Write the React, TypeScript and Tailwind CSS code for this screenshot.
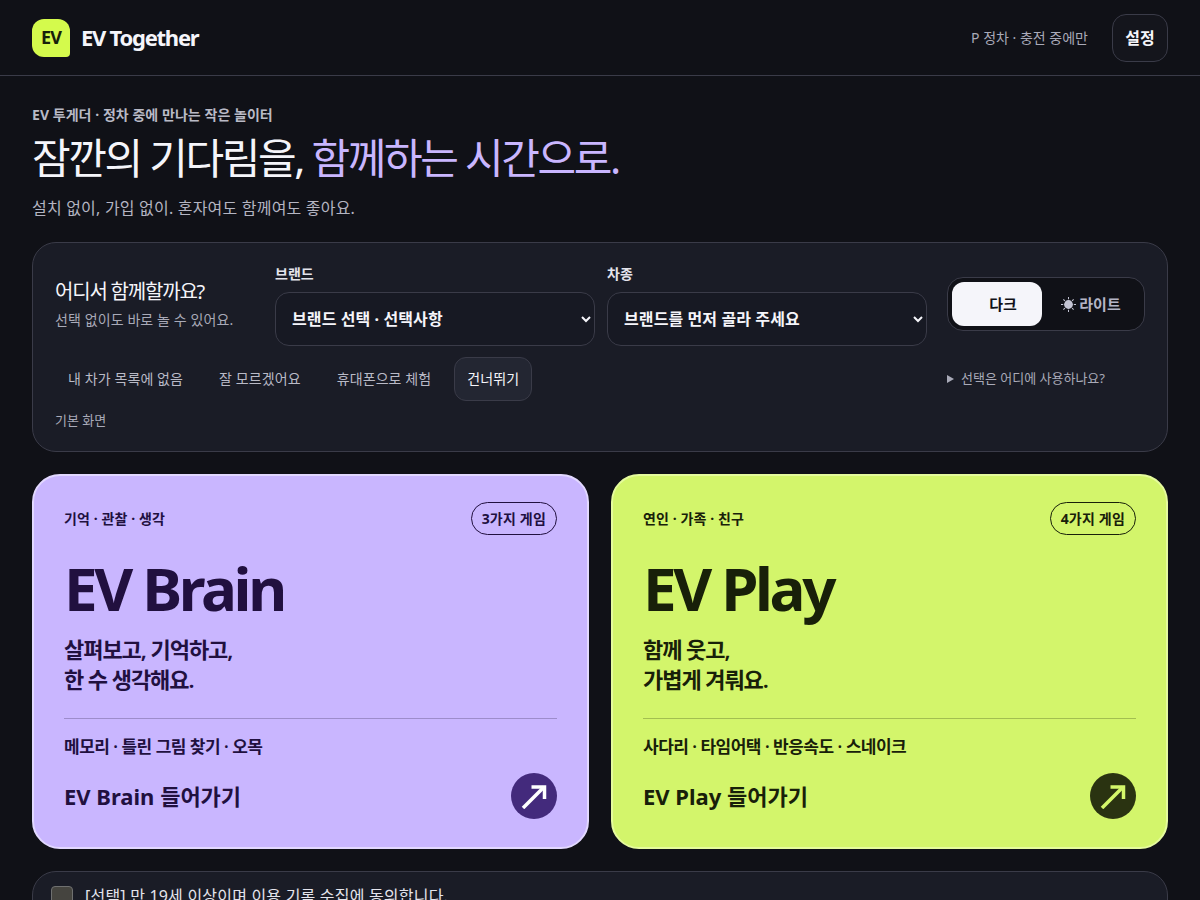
import React from "react";

const sans = "font-['Noto_Sans','Noto_Sans_CJK_KR',sans-serif]";

function Arrow({ color }: { color: string }) {
  return (
    <svg width="26" height="26" viewBox="0 0 26 26" fill="none" stroke={color} strokeWidth="3.5">
      <path d="M2 25 L23 4" />
      <path d="M10.5 4 H23.5 V16" />
    </svg>
  );
}

function Sun() {
  return (
    <svg width="15" height="15" viewBox="0 0 15 15" fill="#c4c5d4">
      <circle cx="7.5" cy="7.5" r="4.4" />
      <path d="M7 0h1v2.2H7zM7 12.8h1V15H7zM0 7h2.2v1H0zM12.8 7H15v1h-2.2zM2 2.7l.7-.7 1.6 1.6-.7.7zM10.7 11.4l.7-.7 1.6 1.6-.7.7zM2 12.3l1.6-1.6.7.7-1.6 1.6zM10.7 3.6L12.3 2l.7.7-1.6 1.6z" />
    </svg>
  );
}

function Card({
  tag, badge, title, l1, l2, games, cta, bg, border, ink, circle, arrow, rule,
}: {
  tag: string; badge: string; title: string; l1: string; l2: string; games: string; cta: string;
  bg: string; border: string; ink: string; circle: string; arrow: string; rule: string;
}) {
  return (
    <a className={`flex h-[375px] w-[557px] flex-col rounded-[28px] border-2 px-[30px] pt-[26px] ${bg} ${border} ${ink}`}>
      <div className="flex items-center justify-between">
        <span className="text-[14px] font-bold tracking-[0.1px]">{tag}</span>
        <span className="flex h-[33px] items-center rounded-full border border-current px-[10px] text-[14px] font-bold tracking-[0.2px]">{badge}</span>
      </div>
      <h2 className="mt-[15px] text-[60px] leading-[76px] font-bold tracking-[-3.35px]">{title}</h2>
      <p className="mt-[8px] text-[22px] leading-[30px] font-semibold tracking-[-1.05px]">
        {l1}
        <br />
        {l2}
      </p>
      <div className={`mt-[24px] h-px w-full ${rule}`} />
      <p className="mt-[15px] text-[17px] leading-[25px] font-semibold tracking-[-0.5px]">{games}</p>
      <div className="mt-[14px] flex items-center justify-between">
        <span className="text-[22px] font-bold">{cta}</span>
        <span className={`flex h-[46px] w-[46px] items-center justify-center rounded-full ${circle}`}>
          <Arrow color={arrow} />
        </span>
      </div>
    </a>
  );
}

export default function App() {
  return (
    <div className={`h-[900px] w-full overflow-hidden bg-[#101117] text-[#f5f5fa] ${sans}`}>
      <header className="flex h-[76px] items-center justify-between border-b border-[#3a3b48] px-8">
        <div className="flex items-center gap-[11px]">
          <span className="flex h-[38px] w-[38px] items-center justify-center rounded-[12px] rounded-br-[4px] bg-[#d4fa4c] text-[18px] font-bold tracking-[-1px] text-[#17200a]">EV</span>
          <span className="text-[22px] font-bold tracking-[-1.25px]">EV Together</span>
        </div>
        <div className="flex items-center gap-6">
          <span className="text-[14px] text-[#a9aab8]">P 정차 · 충전 중에만</span>
          <button className="h-[48px] w-[56px] rounded-[14px] border border-[#3a3b48] bg-[#14151c] text-[16px] font-bold">설정</button>
        </div>
      </header>

      <main className="px-8 pt-[28px]">
        <p className="text-[14px] leading-[22px] font-bold tracking-[0.05px] text-[#b9bac6]">EV 투게더 · 정차 중에 만나는 작은 놀이터</p>
        <h1 className="mt-[6px] text-[42px] leading-[52px] font-normal tracking-[-2.4px]">
          잠깐의 기다림을, <span className="text-[#c9b6ff]">함께하는 시간으로.</span>
        </h1>
        <p className="mt-[12px] text-[16px] leading-[24px] tracking-[0.2px] text-[#b4b5c2]">설치 없이, 가입 없이. 혼자여도 함께여도 좋아요.</p>

        <section className="mt-[22px] h-[210px] rounded-[24px] border border-[#3a3b48] bg-[#1a1c26] px-[22px] pt-[21px]">
          <div className="flex items-start">
            <div className="w-[220px] pt-[14px]">
              <p className="text-[20px] leading-[28px] tracking-[-1.2px]">어디서 함께할까요?</p>
              <p className="mt-[3px] text-[14px] leading-[22px] tracking-[0.1px] text-[#a9aab8]">선택 없이도 바로 놀 수 있어요.</p>
            </div>
            <label className="mr-3 block w-[320px]">
              <span className="block text-[14px] leading-[20px] font-bold text-[#e4e4ec]">브랜드</span>
              <select className="mt-[8px] h-[54px] w-full rounded-[14px] border border-[#3a3b48] bg-[#171923] pl-[12px] text-[16px] font-bold tracking-[0.1px] text-[#f5f5fa]">
                <option>브랜드 선택 · 선택사항</option>
              </select>
            </label>
            <label className="block w-[320px]">
              <span className="block text-[14px] leading-[20px] font-bold text-[#e4e4ec]">차종</span>
              <select className="mt-[8px] h-[54px] w-full rounded-[14px] border border-[#3a3b48] bg-[#171923] pl-[12px] text-[16px] font-bold tracking-[0.1px] text-[#f5f5fa]">
                <option>브랜드를 먼저 골라 주세요</option>
              </select>
            </label>
            <div className="mt-[13px] ml-auto flex h-[54px] w-[198px] items-center rounded-[16px] border border-[#3a3b48] bg-[#101117] p-[4px]">
              <span className="flex h-[44px] w-[90px] items-center justify-center rounded-[12px] bg-[#f5f5fa] pl-[12px] text-[15px] font-bold text-[#101117]">다크</span>
              <span className="flex h-[44px] flex-1 items-center justify-center gap-[3px] text-[15px] font-bold text-[#b4b5c6]">
                <Sun />
                라이트
              </span>
            </div>
          </div>

          <div className="mt-[11px] flex items-start justify-between">
            <div>
              <div className="flex items-center gap-[10px] text-[14px] tracking-[0.1px] text-[#b9bac6]">
                <button className="h-[44px] px-[13px] pb-[2px]">내 차가 목록에 없음</button>
                <button className="h-[44px] px-[13px] pb-[2px]">잘 모르겠어요</button>
                <button className="h-[44px] px-[13px] pb-[2px]">휴대폰으로 체험</button>
                <button className="h-[44px] rounded-[12px] border border-[#3a3b48] bg-[#232632] px-[12px] pb-[2px] text-[#f5f5fa]">건너뛰기</button>
              </div>
              <p className="mt-[9px] text-[13px] leading-[20px] text-[#a9aab8]">기본 화면</p>
            </div>
            <p className="flex h-[44px] w-[198px] items-center gap-[7px] text-[13px] text-[#a9aab8]">
              <span className="h-0 w-0 border-y-[4px] border-l-[7px] border-y-transparent border-l-[#a9aab8]" />
              선택은 어디에 사용하나요?
            </p>
          </div>
        </section>

        <section className="mt-[22px] flex justify-between">
          <Card tag="기억 · 관찰 · 생각" badge="3가지 게임" title="EV Brain" l1="살펴보고, 기억하고," l2="한 수 생각해요." games="메모리 · 틀린 그림 찾기 · 오목" cta="EV Brain 들어가기"
            bg="bg-[#c9b6ff]" border="border-[#e2d8ff]" ink="text-[#21103f]" circle="bg-[#432a7c]" arrow="#ffffff" rule="bg-[#9d8ccb]" />
          <Card tag="연인 · 가족 · 친구" badge="4가지 게임" title="EV Play" l1="함께 웃고," l2="가볍게 겨뤄요." games="사다리 · 타임어택 · 반응속도 · 스네이크" cta="EV Play 들어가기"
            bg="bg-[#d3f56b]" border="border-[#e5fb9d]" ink="text-[#182009]" circle="bg-[#2a3311]" arrow="#d4f76a" rule="bg-[#a3bf50]" />
        </section>

        <section className="mt-[22px] flex h-[60px] items-start gap-[12px] rounded-[24px] border border-[#3a3b48] bg-[#1a1c26] px-[18px] pt-[14px]">
          <span className="h-[22px] w-[22px] shrink-0 rounded-[4px] border border-[#6f7070] bg-[#45443f]" />
          <span className="text-[16px] leading-[20px] tracking-[0.2px] text-[#e4e4ec]">[선택] 만 19세 이상이며 이용 기록 수집에 동의합니다.</span>
        </section>
      </main>
    </div>
  );
}
